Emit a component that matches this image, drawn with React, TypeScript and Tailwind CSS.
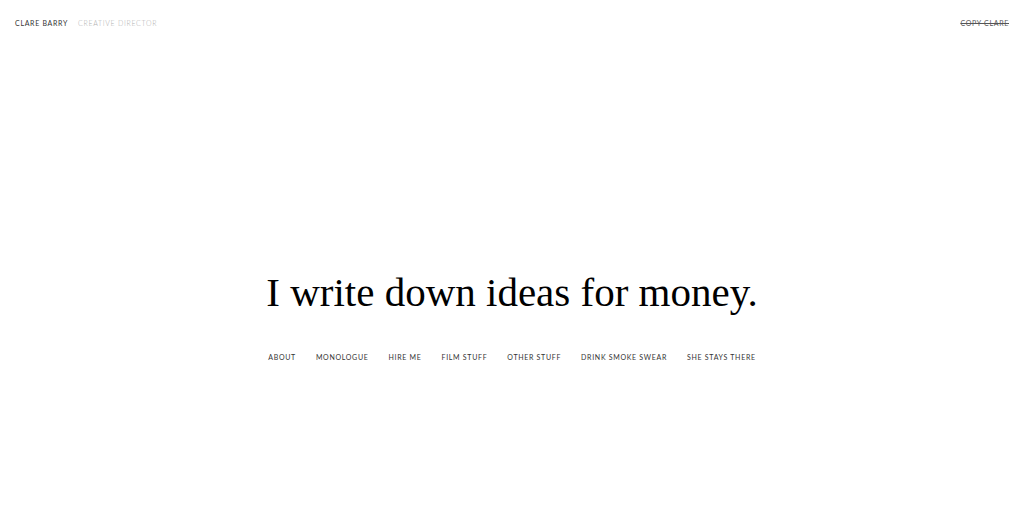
export default function App() {
  const links = ['About', 'Monologue', 'Hire me', 'Film stuff', 'Other stuff', 'Drink smoke swear', 'She stays there'];

  return (
    <div className="h-[505px] w-full bg-white flex flex-col font-['Lato',sans-serif]">
      {/* Top bar */}
      <header className="flex items-center justify-between px-[15px] pt-[20px]">
        <div className="flex items-center gap-[10px] text-[7px] uppercase tracking-[0.1em] leading-none">
          <span className="text-[#333]">Clare Barry</span>
          <span className="text-[#b0b0b0] font-light">Creative Director</span>
        </div>
        <a className="text-[7px] uppercase tracking-[0.1em] leading-none text-[#555] line-through">Copy Clare</a>
      </header>

      {/* Hero */}
      <main className="flex flex-col items-center pt-[245px]">
        <h1 className="font-['Liberation_Serif',serif] text-[41px] leading-none text-black">
          I write down ideas for money.
        </h1>
        <nav className="flex items-center gap-[20px] mt-[41px]">
          {links.map(link => (
            <a key={link} className="text-[7px] uppercase tracking-[0.1em] text-[#333] leading-none">
              {link}
            </a>
          ))}
        </nav>
      </main>
    </div>
  );
}
